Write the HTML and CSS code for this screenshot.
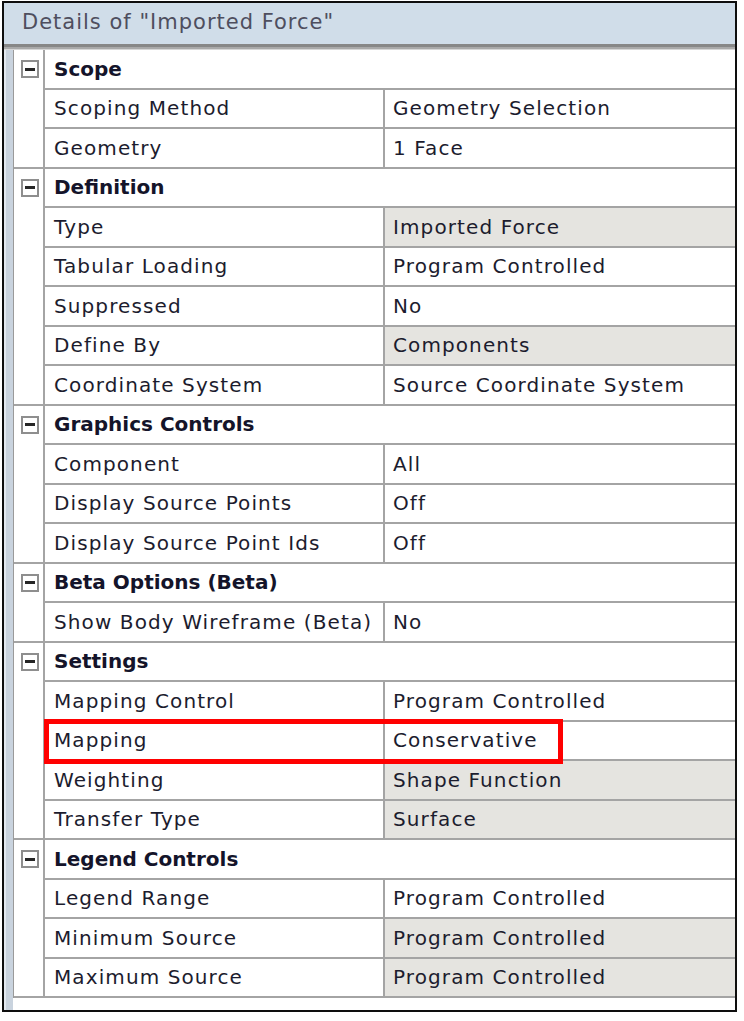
FILE: index.html
```html
<!DOCTYPE html>
<html>
<head>
<meta charset="utf-8">
<link rel="stylesheet" href="styles.css">
</head>
<body>
<div class="frame">
  <div class="title">Details of "Imported Force"</div>
  <div class="band"></div>
  <div class="main">
    <div class="strip"></div>
    <div class="grid">
      <div class="section">
        <div class="exp"><span class="minus"></span></div>
        <div class="rows">
          <div class="row cat">Scope</div>
          <div class="row"><div class="lab">Scoping Method</div><div class="val">Geometry Selection</div></div>
          <div class="row"><div class="lab">Geometry</div><div class="val">1 Face</div></div>
        </div>
      </div>
      <div class="section">
        <div class="exp"><span class="minus"></span></div>
        <div class="rows">
          <div class="row cat">Definition</div>
          <div class="row"><div class="lab">Type</div><div class="val ro">Imported Force</div></div>
          <div class="row"><div class="lab">Tabular Loading</div><div class="val">Program Controlled</div></div>
          <div class="row"><div class="lab">Suppressed</div><div class="val">No</div></div>
          <div class="row"><div class="lab">Define By</div><div class="val ro">Components</div></div>
          <div class="row"><div class="lab">Coordinate System</div><div class="val">Source Coordinate System</div></div>
        </div>
      </div>
      <div class="section">
        <div class="exp"><span class="minus"></span></div>
        <div class="rows">
          <div class="row cat">Graphics Controls</div>
          <div class="row"><div class="lab">Component</div><div class="val">All</div></div>
          <div class="row"><div class="lab">Display Source Points</div><div class="val">Off</div></div>
          <div class="row"><div class="lab">Display Source Point Ids</div><div class="val">Off</div></div>
        </div>
      </div>
      <div class="section">
        <div class="exp"><span class="minus"></span></div>
        <div class="rows">
          <div class="row cat">Beta Options (Beta)</div>
          <div class="row"><div class="lab">Show Body Wireframe (Beta)</div><div class="val">No</div></div>
        </div>
      </div>
      <div class="section">
        <div class="exp"><span class="minus"></span></div>
        <div class="rows">
          <div class="row cat">Settings</div>
          <div class="row"><div class="lab">Mapping Control</div><div class="val">Program Controlled</div></div>
          <div class="row marked"><div class="lab">Mapping</div><div class="val">Conservative</div><div class="redbox"></div></div>
          <div class="row"><div class="lab">Weighting</div><div class="val ro">Shape Function</div></div>
          <div class="row"><div class="lab">Transfer Type</div><div class="val ro">Surface</div></div>
        </div>
      </div>
      <div class="section">
        <div class="exp"><span class="minus"></span></div>
        <div class="rows">
          <div class="row cat">Legend Controls</div>
          <div class="row"><div class="lab">Legend Range</div><div class="val">Program Controlled</div></div>
          <div class="row"><div class="lab">Minimum Source</div><div class="val ro">Program Controlled</div></div>
          <div class="row"><div class="lab">Maximum Source</div><div class="val ro">Program Controlled</div></div>
        </div>
      </div>
    </div>
  </div>
</div>
</body>
</html>
```

FILE: styles.css
```css
html, body {
  margin: 0;
  padding: 0;
  background: #ffffff;
}

.frame {
  box-sizing: border-box;
  margin: 1px 0 0 2px;
  width: 735px;
  height: 1011px;
  border: 2px solid #0e0e0e;
  display: flex;
  flex-direction: column;
  font-family: "DejaVu Sans", "Noto Sans", sans-serif;
  color: #1c1c2e;
  background: #ffffff;
}

.title {
  height: 41px;
  flex: none;
  background: #d0dde9;
  padding: 0 0 3px 18px;
  display: flex;
  align-items: center;
  font-size: 21px;
  letter-spacing: 1px;
  color: #4e4e5e;
  box-sizing: border-box;
}

.band {
  flex: none;
  height: 6px;
  box-sizing: border-box;
  border-top: 3px solid #878787;
  border-bottom: 1px solid #d6d6d6;
  background: #a9a9a9;
}

.main {
  flex: 1;
  display: flex;
}

.strip {
  width: 9px;
  flex: none;
  background: linear-gradient(to right, #e3e9f0 0, #e3e9f0 2px, #c9d3de 2px, #c9d3de 100%);
}

.grid {
  flex: 1;
  border-left: 1px solid #9a9a9a;
  display: flex;
  flex-direction: column;
  align-self: flex-start;
}

.section {
  display: flex;
}

.exp {
  box-sizing: border-box;
  width: 31px;
  flex: none;
  border-right: 2px solid #a4a4a4;
  border-bottom: 2px solid #a4a4a4;
  padding: 10px 0 0 7px;
}

.minus {
  display: block;
  box-sizing: border-box;
  width: 18px;
  height: 18px;
  border: 2px solid #8e8e8e;
  background: linear-gradient(#262626, #262626) center / 10px 3px no-repeat, #ffffff;
}

.rows {
  flex: 1;
  display: flex;
  flex-direction: column;
}

.row {
  box-sizing: border-box;
  height: 39.5px;
  border-bottom: 2px solid #a4a4a4;
  display: flex;
  font-size: 20px;
  letter-spacing: 1.1px;
}

.cat {
  align-items: center;
  padding-left: 9px;
  font-weight: 700;
  letter-spacing: 0;
  color: #14142a;
}

.lab {
  box-sizing: border-box;
  width: 340px;
  flex: none;
  border-right: 2px solid #a4a4a4;
  padding-left: 9px;
  display: flex;
  align-items: center;
}

.val {
  flex: 1;
  padding-left: 8px;
  display: flex;
  align-items: center;
}

.ro {
  background: #e5e4e0;
}

.marked {
  position: relative;
}

.redbox {
  position: absolute;
  left: -1px;
  top: -3px;
  width: 519px;
  height: 45px;
  box-sizing: border-box;
  border: 5px solid #ff0000;
}
```
